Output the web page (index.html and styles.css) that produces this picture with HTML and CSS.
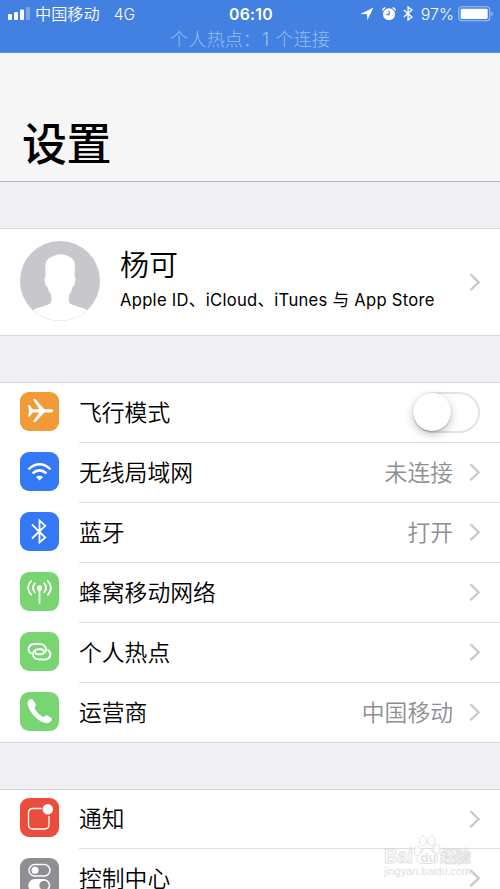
FILE: index.html
```
<!DOCTYPE html>
<html lang="zh-CN">
<head>
<meta charset="utf-8">
<title>设置</title>
<link rel="stylesheet" href="styles.css">
</head>
<body>
<svg width="0" height="0" class="defs"><defs>
  <symbol id="chev" viewBox="0 0 12 18"><path d="M1.500 1.300 9.600 9.200 1.500 17.100" fill="none" stroke="#c7c7cc" stroke-width="2.300"/></symbol>
</defs></svg>
<div class="screen">
  <div class="status">
    <div class="bar">
      <div class="left">
        <svg class="signal" width="23" height="14" viewBox="0 0 23 14" fill="#fff"><rect x="0" y="8" width="4" height="6" rx="1"/><rect x="6" y="6" width="4" height="8" rx="1"/><rect x="12" y="3.500" width="4" height="10.500" rx="1"/><rect x="18" y="1" width="4" height="13" rx="1" opacity=".3"/></svg>
        <span class="carrier">中国移动</span><span class="net">4G</span>
      </div>
      <span class="time">06:10</span>
      <div class="right">
        <svg width="14" height="14" viewBox="0 0 14 14"><path d="M13.500.5 7.300 13.300 7 7.200.5 6.900z" fill="#fff"/></svg>
        <svg class="alarm" width="14" height="14" viewBox="0 0 14 14"><circle cx="7" cy="7.300" r="6" fill="#fff"/><path d="M.6 3.500Q1 1.400 3.300.8M13.400 3.500Q13 1.400 10.700.8" fill="none" stroke="#fff" stroke-width="1.400"/><path d="M7.200 3.800v3.900H4.400" fill="none" stroke="#4281e1" stroke-width="1.200"/></svg>
        <svg class="bt" width="10" height="15" viewBox="0 0 10 15"><path d="M.8 4 9 11 5.100 14V1L9 4 .8 11" fill="none" stroke="#fff" stroke-width="1.400"/></svg>
        <span class="pct">97%</span>
        <svg class="battery" width="36" height="16" viewBox="0 0 36 16"><rect x=".8" y=".8" width="31" height="14" rx="3" fill="none" stroke="#a3c2f1" stroke-width="1.100"/><rect x="2.700" y="2.700" width="27" height="10.300" rx="1.400" fill="#fff"/><path d="M33.300 5.300q3 2.500 0 5z" fill="#a3c2f1"/></svg>
      </div>
    </div>
    <div class="hotspot">个人热点：<span class="count">1</span> 个连接</div>
  </div>
  <header class="head"><h1>设置</h1></header>

  <section class="profile">
    <svg class="avatar" width="80" height="80" viewBox="0 0 80 80"><circle cx="40" cy="40" r="40" fill="#c7c7cc"/><path d="M13 69C17 66 29 65 31 61.500Q32 57 31 53 28 50 27.500 46 25 45.500 24.500 38 24.500 36 25.500 35.500L25.300 24Q26 18 31 16 36 13.300 40.500 13.300 46 13.500 50 16 54.700 18.500 55 24L54.500 35.500Q55.900 36 55.300 40 54.500 45.500 52.500 46 51.700 51 49 54 48.500 58 49 61.500C52 65 63 66 67.200 69A39.300 39.300 0 0 1 13 69Z" fill="#fff"/></svg>
    <div class="who"><div class="name">杨可</div><div class="sub">Apple ID、iCloud、iTunes 与 App Store</div></div>
    <svg class="chev" width="12" height="18"><use href="#chev"/></svg>
  </section>

  <section class="group">
    <div class="row">
      <svg class="icon orange" viewBox="0 0 39 39"><path d="M8 13.200h1.700l3.100 4h6.500L13.200 7.700Q13 7 13.700 7h1.700l8.900 10.200h6.500q2.500.4 2.500 1.700t-2.500 1.700h-6.500L15.400 30h-1.700q-.7 0-.5-.7l6.100-8.700h-6.500l-3.100 4H8l1.200-5.700z" fill="#fff"/></svg>
      <div class="cell"><span class="label">飞行模式</span><span class="switch"><i class="knob"></i></span></div>
    </div>
    <div class="row">
      <svg class="icon blue" viewBox="0 0 39 39"><g fill="none" stroke="#fff" stroke-width="2.500"><path d="M8.500 17.300q11-10 22 0M12.500 21.400q7-6 14 0"/></g><path d="M16 25q3.500-2.700 7 0l-3.500 3.600z" fill="#fff"/></svg>
      <div class="cell"><span class="label">无线局域网</span><span class="value">未连接</span><svg class="chev" width="12" height="18"><use href="#chev"/></svg></div>
    </div>
    <div class="row">
      <svg class="icon blue" viewBox="0 0 39 39"><path d="M12 12.500 25.200 25.500 19.500 30.500V8.500L25.200 13.700 12 26.500" fill="none" stroke="#fff" stroke-width="1.800"/></svg>
      <div class="cell"><span class="label">蓝牙</span><span class="value">打开</span><svg class="chev" width="12" height="18"><use href="#chev"/></svg></div>
    </div>
    <div class="row">
      <svg class="icon green" viewBox="0 0 39 39"><circle cx="19.500" cy="16" r="2.700" fill="#fff"/><g fill="none" stroke="#fff" stroke-width="1.800" stroke-linecap="round"><path d="M19.500 17v14M14.800 11.300q-3.700 4.400 0 9M24.200 11.300q3.700 4.400 0 9M11.100 9q-6 6.800 0 13.600M27.900 9q6 6.800 0 13.600"/></g></svg>
      <div class="cell"><span class="label">蜂窝移动网络</span><svg class="chev" width="12" height="18"><use href="#chev"/></svg></div>
    </div>
    <div class="row">
      <svg class="icon green" viewBox="0 0 39 39"><g fill="none" stroke="#fff" stroke-width="1.900" stroke-linecap="round"><path d="M10.800 21.300C6.500 17.500 9 12 14 12h5.500C28 12 28 22.300 20.500 22.300H18c-2.300 0-3-1.500-2.600-2.800"/><path d="M28.200 18.200C32.500 22 30 27.500 25 27.500h-5.500C11 27.500 11 17.200 18.500 17.200H21c2.300 0 3 1.500 2.600 2.800"/></g></svg>
      <div class="cell"><span class="label">个人热点</span><svg class="chev" width="12" height="18"><use href="#chev"/></svg></div>
    </div>
    <div class="row">
      <svg class="icon green" viewBox="0 0 39 39"><path d="M9.800 7.300Q12 6.500 13.300 8.300L15.700 12Q16.500 13.500 15.200 14.600 14.200 15.600 14.900 16.900 18 22 22.800 24.700 24 25.300 24.900 24 26 22.700 27.500 23.500L31.500 26Q32.500 27 31.700 28.500 29.500 31.700 25.300 31 19 29.500 13 22.700 8 16.500 7.500 11.300 7.500 8.500 9.800 7.300Z" fill="#fff"/></svg>
      <div class="cell"><span class="label">运营商</span><span class="value">中国移动</span><svg class="chev" width="12" height="18"><use href="#chev"/></svg></div>
    </div>
  </section>

  <section class="group second">
    <div class="row">
      <svg class="icon red" viewBox="0 0 39 39"><path d="M21.500 10.500H13Q8.500 10.500 8.500 15v11.500q0 4.500 4.500 4.500h11.500q4.500 0 4.500-4.500V18" fill="none" stroke="#fff" stroke-width="1.300"/><circle cx="27.800" cy="11.300" r="5.200" fill="#fff"/></svg>
      <div class="cell"><span class="label">通知</span><svg class="chev" width="12" height="18"><use href="#chev"/></svg></div>
    </div>
    <div class="row">
      <svg class="icon gray" viewBox="0 0 39 39"><rect x="9" y="6.500" width="21" height="11.500" rx="5.750" fill="none" stroke="#fff" stroke-width="1.400"/><circle cx="15" cy="12.200" r="3.500" fill="#fff"/><rect x="8.300" y="21" width="22" height="13" rx="6.500" fill="#fff"/><circle cx="24" cy="27.500" r="4.700" fill="#8e8e93"/></svg>
      <div class="cell"><span class="label">控制中心</span><svg class="chev" width="12" height="18"><use href="#chev"/></svg></div>
    </div>
  </section>

  <div class="mark">
    <svg width="94" height="48" viewBox="0 0 94 48">
      <g fill="#fff" stroke="#d4d4d4" stroke-width=".9">
        <text x="1" y="29" class="wm-big" textLength="29" lengthAdjust="spacingAndGlyphs">Bai</text>
        <ellipse cx="34.500" cy="17" rx="3.300" ry="4.500"/><ellipse cx="40" cy="7" rx="3.500" ry="5"/><ellipse cx="48.500" cy="7" rx="3.500" ry="5"/><ellipse cx="53.500" cy="15" rx="3.500" ry="4.500"/>
        <path d="M44 14q4 0 6 4 5 3 5 7-1 4.500-5.500 4.500H39q-5.500-.5-5-5 .5-3.500 5-6.500Q40 14 44 14z"/>
        <text x="57" y="28" class="wm-cn" textLength="31">经验</text>
      </g>
      <text x="37.500" y="27.500" class="wm-du">du</text>
      <text x="1" y="41" class="wm-url" textLength="87" lengthAdjust="spacingAndGlyphs">jingyan.baidu.com</text>
    </svg>
  </div>
</div>
</body>
</html>
```

FILE: styles.css
```
* { box-sizing: border-box; }
body { margin: 0; font-family: Inter, "Noto Sans CJK SC", sans-serif; color: #000; }
svg { display: block; flex: none; }
.defs { position: absolute; }
.screen { position: relative; width: 500px; height: 889px; overflow: hidden; background: #efeff4; }

.status { height: 53px; background: #4281e1; color: #fff; border-bottom: 1px solid #5b92e5; }
.bar { display: grid; grid-template-columns: 1fr auto 1fr; align-items: center; height: 27px; padding: 0 8px; font-size: 16px; line-height: 27px; }
.left, .right { display: flex; align-items: center; }
.right { justify-content: flex-end; }
.signal { margin-top: -1px; }
.carrier { margin: 1px 0 -1px 4px; font-weight: 350; font-size: 16.200px; }
.net { margin: 1px 0 -1px 14px; font-size: 15.500px; font-weight: 350; }
.time { margin: 1px -1px -1px 1px; font-weight: 600; font-size: 15.800px; letter-spacing: .3px; }
.alarm { margin-left: 8px; }
.bt { margin-left: 7px; }
.pct { margin: 1px 0 -1px 8px; font-size: 16px; font-weight: 350; }
.battery { margin-left: 4px; margin-right: -2px; }
.hotspot { height: 25px; line-height: 25px; font-size: 18.200px; font-weight: 300; text-align: center; color: #98bdf3; }
.count { margin: 0 1px; }

.head { height: 129px; padding: 60px 22px 0; background: #f6f6f6; border-bottom: 1px solid #b9b9bb; }
h1 { margin: 0; font-size: 45px; line-height: 64px; font-weight: 500; letter-spacing: -.5px; }

.profile { display: flex; height: 108px; margin-top: 46px; padding: 0 19px 0 20px; align-items: center; background: #fff; border: solid #d5d5d9; border-width: 1px 0; }
.avatar { margin-top: -2px; }
.profile .chev { margin-top: -1px; }
.who { flex: 1; margin-left: 20px; margin-top: -6px; }
.name { font-size: 29px; line-height: 40px; font-weight: 350; }
.sub { margin-top: 1px; font-size: 16.600px; letter-spacing: .28px; line-height: 26px; white-space: nowrap; }

.group { margin-top: 46px; background: #fff; border-top: 1px solid #d5d5d9; border-bottom: 1px solid #d5d5d9; }
.row { display: flex; height: 60px; padding-left: 20px; }
.row:last-child { height: 59px; }
.icon { width: 39px; height: 39px; margin: 9px 20px 0 0; border-radius: 9px; }
.orange { background: #f19a38; }
.blue { background: #3478f6; }
.green { background: #78d572; }
.red { background: #eb4d3d; }
.gray { background: #8e8e93; }
.cell { flex: 1; display: flex; align-items: center; padding-right: 19px; border-bottom: 1px solid #dededf; }
.row:last-child .cell { border-bottom: 0; }
.label { flex: 1; font-size: 22.800px; line-height: 58px; font-weight: 350; }
.value { font-size: 22.800px; line-height: 58px; color: #8e8e93; font-weight: 350; }
.cell .chev { margin-left: 16px; margin-top: -1px; }
.switch { display: flex; width: 67px; height: 41px; margin-right: 1px; border: 2px solid #e3e3e3; border-radius: 21px; }
.knob { width: 38px; height: 38px; margin: -1px 0 0 -2px; border-radius: 50%; background: #fff; box-shadow: 0 1px 1px rgba(0,0,0,.2), 0 3px 8px rgba(0,0,0,.25); }

.second .row:first-child { height: 59px; }
.second .icon { margin-top: 8px; }
.second .row:last-child .icon { margin-top: 9px; }

.mark { position: absolute; left: 383px; top: 834px; opacity: .75; }
.wm-big { font: bold 21px "Liberation Sans", sans-serif; }
.wm-du { font: bold 13px "Liberation Sans", sans-serif; fill: #d8d8d8; }
.wm-cn { font: bold 16px "Noto Sans CJK SC", sans-serif; }
.wm-url { font: 11px "Liberation Sans", sans-serif; fill: #d4d4d4; }
```
